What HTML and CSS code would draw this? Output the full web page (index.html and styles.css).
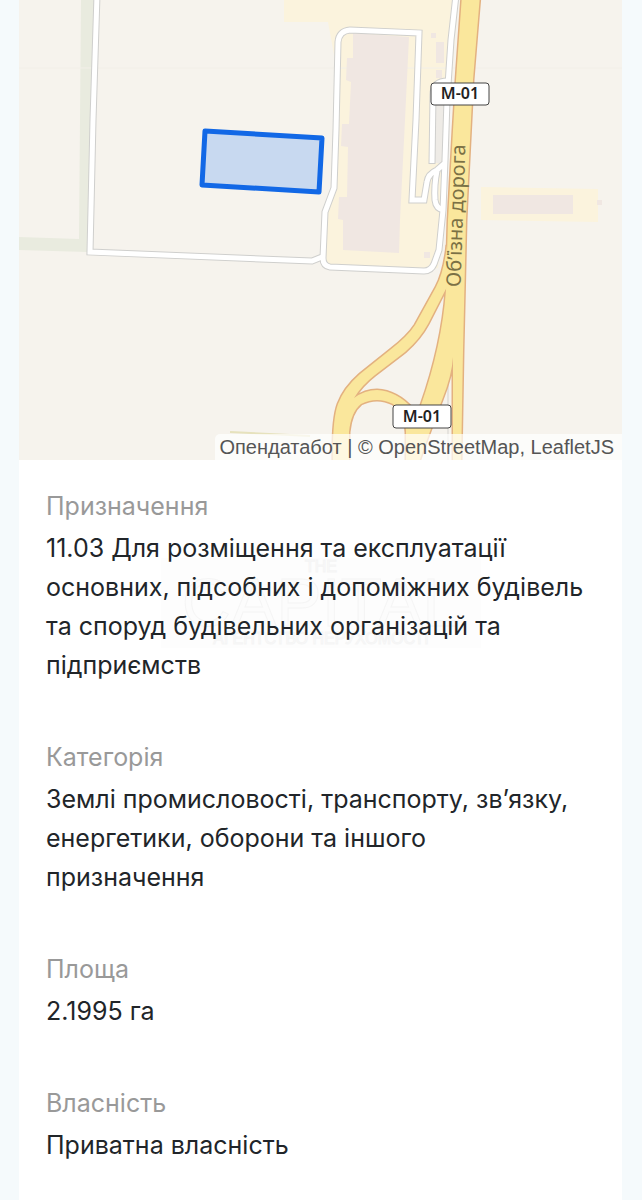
FILE: index.html
```
<!DOCTYPE html>
<html lang="uk">
  <head>
    <meta charset="UTF-8" />
    <meta name="viewport" content="width=device-width, initial-scale=1.0" />
    <title>Земельна ділянка</title>
    <link rel="stylesheet" href="styles.css">
  </head>
  <body>
    <main class="card">
      <div class="map">
        <svg class="map-canvas" viewBox="19 0 603 460" preserveAspectRatio="xMidYMid slice" role="img" aria-label="Ділянка на карті">
          <!-- land use -->
          <path class="green" d="M81 0H95L87 252L19 250V237L79 239Z" />
          <path class="yard" d="M284 0H458L450 100L443 215L438 268L428 270L326 266L321 258L324 210L332 186L335 60L328 22H284Z" />
          <path class="yard" d="M481 187L598 189V222L481 220Z" />
          <path class="paved" d="M434 83L447 81L443 165L434 162Z" />
          <path class="seam" d="M19 68H622" />
          <path class="hedge" d="M230 432L310 436" />

          <!-- buildings -->
          <path class="building" d="M353 33L409 37L405 120L400 220L399 253L343 250V220L338 219L339 197H347L348 147L341 146L342 124H349L351 82L346 80L347 58H353Z" />
          <path class="building" d="M493 195H573V214H493Z" />
          <path class="building" d="M436 42H444V63H436ZM431 33H436V38H431ZM436 70H442V78H436ZM424 252H430V258H424ZM597 200H602V205H597Z" />

          <!-- service roads -->
          <g class="road-case">
            <path d="M97 -5L93 120L90 252L312 261L322 257" />
            <path d="M456 -5L451 40L447 100L445 160L443 210L439 250L434 264Q431 271 424 271L330 267Q323 266 323 258L325 212L334 188L336 130L338 42Q339 31 350 30L419 33L416 120L412 200H424L427 182Q428 174 437 170L445 163" />
            <path d="M432 164L433 95Q433 81 448 81" />
            <path d="M437 171Q434 185 435 200Q436 209 444 210" />
          </g>
          <g class="road-fill">
            <path d="M97 -5L93 120L90 252L312 261L322 257" />
            <path d="M456 -5L451 40L447 100L445 160L443 210L439 250L434 264Q431 271 424 271L330 267Q323 266 323 258L325 212L334 188L336 130L338 42Q339 31 350 30L419 33L416 120L412 200H424L427 182Q428 174 437 170L445 163" />
            <path d="M432 163L433 95Q433 81 448 81" />
            <path d="M437 171Q434 185 435 200Q436 209 444 210" />
          </g>
          <path class="track" d="M448 380V460" />

          <!-- highway with its ramps -->
          <g class="highway-case">
            <path d="M462 -5L456 80L453 130L448 220L446 290Q442 345 421 405L406 430V465H418Q432 425 442 400Q452 375 453 357V465H461L463 350L466 220L471 120L473 80L480 -5Z" />
            <path d="M447 245Q444 272 436 287L415 325Q408 336 390 350L360 374Q344 388 338 404Q332 420 333 465H349V432Q351 412 361 404Q377 396 393 404Q404 412 406 430H418L413 409Q397 391 377 390Q365 390 354 398Q362 385 375 375L405 352Q420 339 428 324L448 285Z" />
          </g>
          <g class="highway-fill">
            <path d="M462 -5L456 80L453 130L448 220L446 290Q442 345 421 405L406 430V465H418Q432 425 442 400Q452 375 453 357V465H461L463 350L466 220L471 120L473 80L480 -5Z" />
            <path d="M447 245Q444 272 436 287L415 325Q408 336 390 350L360 374Q344 388 338 404Q332 420 333 465H349V432Q351 412 361 404Q377 396 393 404Q404 412 406 430H418L413 409Q397 391 377 390Q365 390 354 398Q362 385 375 375L405 352Q420 339 428 324L448 285Z" />
          </g>
          <text class="street" text-anchor="middle" transform="translate(463 216) rotate(-88)">Об’їзна дорога</text>

          <!-- road numbers -->
          <rect class="shield" x="431" y="83" width="58" height="22" rx="3" />
          <text class="shield-text" x="460" y="99" text-anchor="middle">М-01</text>
          <rect class="shield" x="393" y="405" width="58" height="23" rx="3" />
          <text class="shield-text" x="422" y="422" text-anchor="middle">М-01</text>

          <path class="parcel" d="M205 131L322 138L319 192L202 185Z" />
        </svg>
        <div class="attribution">
          <a href="#">Опендатабот</a> | © <a href="#">OpenStreetMap</a>, <a href="#">LeafletJS</a>
        </div>
      </div>

      <div class="content">
        <svg class="watermark" viewBox="0 0 320 90" aria-hidden="true">
          <rect width="320" height="90" />
          <text class="mark-small" x="160" y="14" text-anchor="middle">THE</text>
          <text class="mark-big" x="160" y="68" text-anchor="middle">CAPITAL</text>
          <text class="mark-small" x="160" y="86" text-anchor="middle">АГЕНТСТВО НЕРУХОМОСТІ</text>
        </svg>
        <dl class="details">
          <div class="item">
            <dt>Призначення</dt>
            <dd>11.03 Для розміщення та експлуатації основних, підсобних і допоміжних будівель та споруд будівельних організацій та підприємств</dd>
          </div>
          <div class="item">
            <dt>Категорія</dt>
            <dd>Землі промисловості, транспорту, зв’язку, енергетики, оборони та іншого призначення</dd>
          </div>
          <div class="item">
            <dt>Площа</dt>
            <dd>2.1995 га</dd>
          </div>
          <div class="item">
            <dt>Власність</dt>
            <dd>Приватна власність</dd>
          </div>
        </dl>
      </div>
    </main>
  </body>
</html>
```
FILE: styles.css
```
* {
  margin: 0;
  padding: 0;
  box-sizing: border-box;
}
body {
  background: #f5fafc;
  font-family: Inter, 'Noto Sans', sans-serif;
  color: #212529;
}
.card {
  min-height: 100vh;
  margin: 0 20px 0 19px;
  background: #fff;
}
.map {
  position: relative;
  aspect-ratio: 603 / 460;
  background: #f6f3ed;
  overflow: hidden;
}
.map-canvas {
  display: block;
  width: 100%;
  height: 100%;
}
.green {
  fill: #e9ebdf;
}
.yard {
  fill: #fbf3dd;
}
.paved {
  fill: #eeebe6;
}
.building {
  fill: #f0e7e2;
}
.seam {
  stroke: #f2efe8;
}
.hedge {
  stroke: #e6e2bd;
  stroke-width: 2;
}
.road-case path {
  fill: none;
  stroke: #cfcfcd;
  stroke-width: 7;
}
.road-fill path {
  fill: none;
  stroke: #fff;
  stroke-width: 5;
}
.track {
  stroke: #d5d3cf;
}
.highway-case path {
  fill: none;
  stroke: #e3b180;
  stroke-width: 3;
}
.highway-fill path {
  fill: #fae79c;
}
.street {
  font: 20px 'Noto Sans', sans-serif;
  fill: #7b7145;
}
.shield {
  fill: #fff;
  stroke: #444;
}
.shield-text {
  font: 600 16px 'Noto Sans', sans-serif;
  fill: #222;
}
.parcel {
  fill: #c8d9f0;
  stroke: #1268e6;
  stroke-width: 5;
  stroke-linejoin: round;
}
.attribution {
  position: absolute;
  right: 0;
  bottom: 0;
  padding: 0 8px 0 4px;
  border-top-left-radius: 5px;
  background: rgba(255, 255, 255, 0.7);
  font: 20px/26px 'Liberation Sans', Arial, sans-serif;
  color: #555;
  white-space: nowrap;
}
.attribution a {
  color: inherit;
  text-decoration: none;
}
.content {
  position: relative;
}
.watermark {
  position: absolute;
  top: 98px;
  left: 50%;
  width: 320px;
  margin-left: -160px;
}
.watermark rect {
  fill: #fdfdfd;
}
.watermark text {
  fill: #fcfcfc;
  stroke: #f5f5f5;
}
.mark-small {
  font: 16px 'Liberation Sans', sans-serif;
}
.mark-big {
  font: 68px 'Liberation Sans', sans-serif;
}
.details {
  position: relative;
  display: flex;
  flex-direction: column;
  gap: 53px;
  padding: 27px 36px 27px 27px;
  font-size: 25px;
  line-height: 39px;
}
.item {
  display: flex;
  flex-direction: column;
  gap: 3px;
}
.item dt {
  color: #999;
}
```
